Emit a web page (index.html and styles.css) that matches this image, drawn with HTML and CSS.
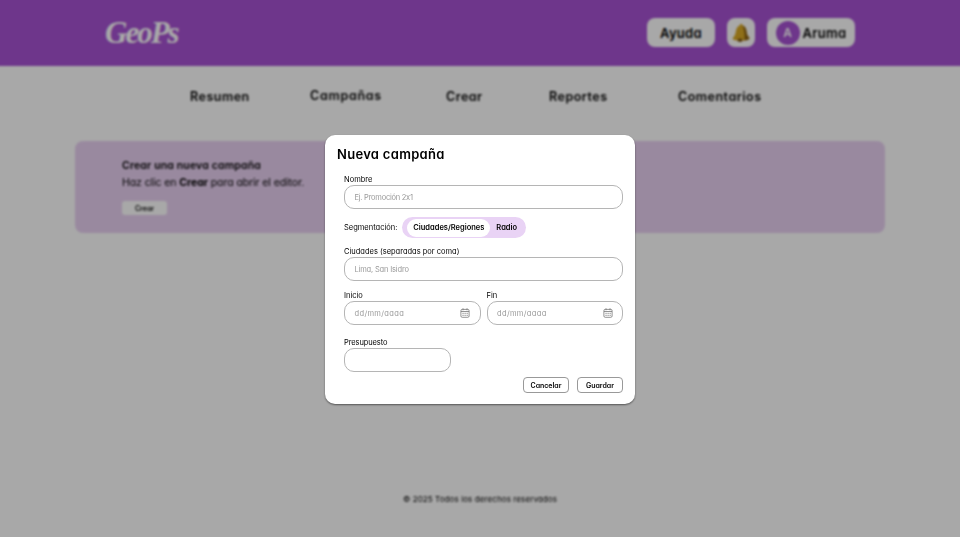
FILE: index.html
```html
<!DOCTYPE html>
<html lang="es">
<head>
<meta charset="utf-8">
<title>GeoPs</title>
<link rel="stylesheet" href="styles.css">
</head>
<body>
<div class="page">
  <header class="topbar">
    <div class="logo">GeoPs</div>
    <div class="actions">
      <div class="pill help">Ayuda</div>
      <div class="pill bell">
        <svg width="18" height="20" viewBox="0 0 18 20"><path d="M8 1.500c1-.8 2.500-.3 2.700 1 2.800 1 3.500 3.500 3.900 6.500.3 2.500 1.200 4.200 2.700 5.800.5 1-.5 1.900-2 2.200-4 1-9 1-13.200 0C.8 16.600.3 15.700 1 14.800 3 12.800 3.300 11 3.800 8.500 4.300 5.500 5.300 3.300 7.700 2.500z" fill="#d9a925"/><path d="M10.700 2.500c2.800 1 3.500 3.500 3.900 6.500.3 2.500 1.200 4.200 2.700 5.800.5 1-.5 1.900-2 2.200l-3 .5c1-5-.2-11-1.600-15z" fill="#8c6212"/><ellipse cx="8" cy="17.300" rx="2.600" ry="1.700" fill="#80580f"/></svg>
      </div>
      <div class="pill user"><div class="avatar">A</div>Aruma</div>
    </div>
  </header>
  <nav class="nav">
    <span>Resumen</span><span class="campaigns">Campañas</span><span>Crear</span><span>Reportes</span><span>Comentarios</span>
  </nav>
  <section class="card">
    <div class="card-title">Crear una nueva campaña</div>
    <div class="card-text">Haz clic en <b>Crear</b> para abrir el editor.</div>
    <div class="card-btn">Crear</div>
  </section>
  <footer class="foot">© 2025 Todos los derechos reservados</footer>
</div>
<div class="overlay">
  <div class="modal">
    <h1>Nueva campaña</h1>
    <div class="form">
      <label>Nombre</label>
      <div class="field"><span class="tight">Ej. Promoción 2x1</span></div>
      <div class="seg">
        <span>Segmentación:</span>
        <div class="toggle"><div class="on">Ciudades/Regiones</div><div class="off">Radio</div></div>
      </div>
      <label>Ciudades (separadas por coma)</label>
      <div class="field"><span class="city">Lima, San Isidro</span></div>
      <div class="dates">
        <div><label>Inicio</label>
          <div class="field"><span class="date">dd/mm/aaaa</span><svg class="cal" width="10" height="10" viewBox="0 0 10 10"><use href="#cal"/></svg></div></div>
        <div><label>Fin</label>
          <div class="field"><span class="date">dd/mm/aaaa</span><svg class="cal" width="10" height="10" viewBox="0 0 10 10"><g id="cal"><rect x=".9" y="1.400" width="8.200" height="7.900" rx="1.300" fill="none" stroke="#777" stroke-width=".8"/><path d="M1 3.500h8M3 .3v2M7 .3v2" stroke="#777" stroke-width=".8"/><path d="M2.500 5.300h5.200M2.500 7.300h5.200" stroke="#777" stroke-width="1" stroke-dasharray="1.100 .95"/></g></svg></div></div>
      </div>
      <label class="budget">Presupuesto</label>
      <div class="field short"></div>
    </div>
    <div class="buttons"><div class="btn">Cancelar</div><div class="btn">Guardar</div></div>
  </div>
</div>
</body>
</html>
```
FILE: styles.css
```css
* { box-sizing: border-box; }
body { margin: 0; width: 960px; height: 538px; overflow: hidden; background: #fff; color: #000; font-family: Inter, "Open Sans", sans-serif; font-feature-settings: "cv11", "calt" 0; white-space: nowrap; }
.page { width: 980px; height: 558px; margin: -10px; padding-top: 0; filter: blur(1.2px); }
.topbar { height: 75.500px; background: #a752d3; display: flex; justify-content: space-between; padding: 10px 115px 0; }
.logo { font: italic bold 31px/66px "Liberation Serif", serif; color: #fff; letter-spacing: -2px; }
.actions { display: flex; gap: 12px; padding-top: 18px; }
.pill { height: 29px; border-radius: 8px; background: #fff; display: flex; align-items: center; justify-content: center; font-size: 13px; font-weight: 600; letter-spacing: .3px; }
.help { width: 68px; }
.bell { width: 28px; }
.user { width: 88px; gap: 3px; }
.avatar { width: 24px; height: 24px; border-radius: 50%; background: #a752d3; color: #fff; display: flex; align-items: center; justify-content: center; font-size: 12px; letter-spacing: 0; }
.nav { height: 75.500px; padding: 23px 0 0 200px; display: grid; grid-template-columns: 120px 136px 103px 129px auto; font-size: 12.500px; line-height: 16px; font-weight: 600; letter-spacing: .5px; }
.campaigns { margin-top: -1px; letter-spacing: .72px; }
.card { margin: 0 85px; height: 92px; border-radius: 8px; background: #e9d1f2; padding: 16px 47px; }
.card-title { font-size: 10.500px; line-height: 17px; font-weight: 600; letter-spacing: .15px; }
.card-text { font-size: 10.500px; line-height: 18px; letter-spacing: -.08px; }
.card-btn { width: 45px; height: 14px; margin-top: 9px; background: #fff; border-radius: 3px; font-size: 7px; font-weight: 600; display: flex; align-items: center; justify-content: center; }
.foot { margin-top: 259px; text-align: center; font-size: 8px; line-height: 14px; letter-spacing: .1px; }
.overlay { position: absolute; inset: 0 0 1px; background: rgba(0,0,0,.34); padding: 135px 0 0 325px; }
.modal { width: 310px; height: 269px; background: #fff; border-radius: 10px; box-shadow: 0 1px 2px rgba(0,0,0,.5); padding: 11px 12px 0; }
h1 { margin: 0; font-size: 13px; line-height: 17px; font-weight: 600; letter-spacing: .3px; }
.form { padding: 11px 0 0 7px; }
label { display: block; font-size: 7.500px; line-height: 11px; height: 11px; }
.budget { letter-spacing: -.1px; }
.field { height: 24px; border: 1px solid #b5b5b5; border-radius: 10px; padding: 0 9.500px; display: flex; align-items: center; justify-content: space-between; font-size: 7.500px; color: #999; }
.tight { letter-spacing: -.25px; }
.city { letter-spacing: -.17px; }
.date { letter-spacing: .35px; }
.seg { display: flex; align-items: center; height: 21px; margin: 8px 0; font-size: 7.500px; gap: 5px; }
.toggle { width: 124px; height: 21px; border-radius: 11px; background: #e9d3f5; display: flex; align-items: center; font-weight: 600; font-size: 7.500px; padding-left: 5px; }
.on { width: 83px; height: 18px; border-radius: 9px; background: #fff; display: flex; align-items: center; justify-content: center; }
.off { padding-left: 6px; }
.dates { display: grid; grid-template-columns: 1fr 1fr; gap: 6px; margin: 9px 0 12px; }
.short { width: 107px; }
.buttons { display: flex; justify-content: flex-end; gap: 8px; margin-top: 5px; }
.btn { width: 46px; height: 16px; border: 1px solid #999; border-radius: 4px; font-size: 7px; font-weight: 600; display: flex; align-items: center; justify-content: center; }
```
